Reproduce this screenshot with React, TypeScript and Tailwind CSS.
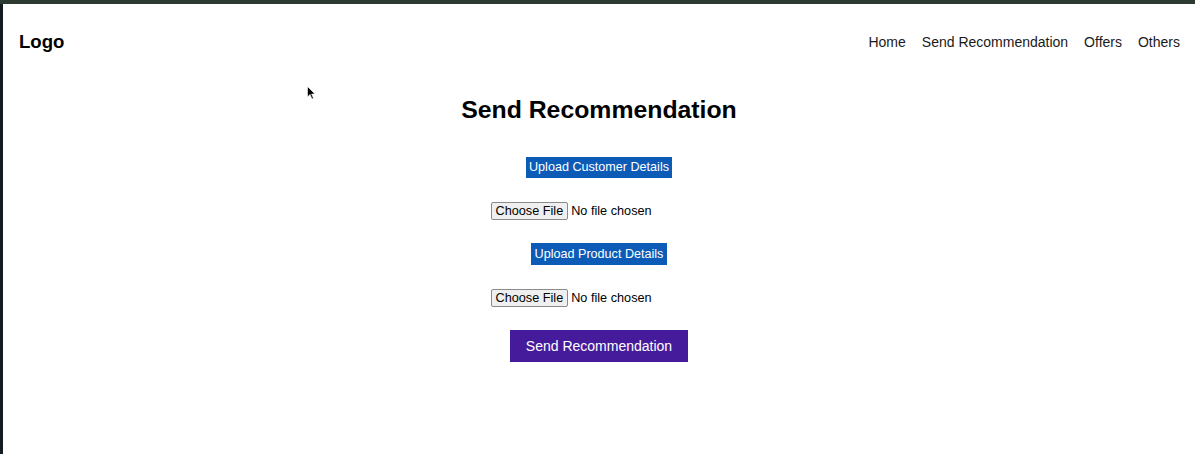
import React from "react";

function FileField() {
  return (
    <div className="w-[217px] flex items-center h-[18px]">
      <button
        type="button"
        className="h-[18px] px-[4px] border border-[#8a8a8a] rounded-[2px] bg-[#efefef] text-[12.7px] leading-[16px] text-black"
      >
        Choose File
      </button>
      <span className="ml-[3px] text-[12.7px] leading-[16px] text-black">No file chosen</span>
    </div>
  );
}

export default function App() {
  return (
    <div
      className="w-[1195px] h-[454px] flex flex-col bg-white overflow-hidden relative"
      style={{ fontFamily: '"Liberation Sans", Arial, sans-serif' }}
    >
      <div className="h-[4px] bg-[#2c3a31] shrink-0" />
      <div className="flex flex-1">
        <div className="w-[3px] bg-[#151c22] shrink-0" />
        <div className="flex-1 flex flex-col">
          <header className="h-[76px] flex items-center justify-between pl-[16px] pr-[15px]">
            <div className="text-[18.6px] font-bold text-black">Logo</div>
            <nav className="flex gap-[16px] text-[14px] text-[#1a1a1a]">
              <span>Home</span>
              <span>Send Recommendation</span>
              <span>Offers</span>
              <span>Others</span>
            </nav>
          </header>
          <main className="flex flex-col items-center">
            <h1 className="mt-[15px] text-[24.8px] leading-[30px] font-bold text-black">
              Send Recommendation
            </h1>
            <button
              type="button"
              className="mt-[32px] h-[21px] px-[3px] bg-[#0c5cb7] text-white text-[12.6px] leading-[21px]"
            >
              Upload Customer Details
            </button>
            <div className="mt-[24px]">
              <FileField />
            </div>
            <button
              type="button"
              className="mt-[23px] h-[22px] px-[4px] bg-[#0c5cb7] text-white text-[12.6px] leading-[22px]"
            >
              Upload Product Details
            </button>
            <div className="mt-[24px]">
              <FileField />
            </div>
            <button
              type="button"
              className="mt-[23px] h-[32px] w-[178px] bg-[#461b9b] text-white text-[14px] leading-[32px]"
            >
              Send Recommendation
            </button>
          </main>
        </div>
      </div>
      <svg
        className="absolute left-[307px] top-[86px]"
        width="9"
        height="14"
        viewBox="0 0 9 14"
      >
        <path d="M0.5 0.5 L0.5 11 L3 8.5 L5 13 L6.5 12.3 L4.6 8 L8 8 Z" fill="#000" stroke="#fff" strokeWidth="0.6" />
      </svg>
    </div>
  );
}
